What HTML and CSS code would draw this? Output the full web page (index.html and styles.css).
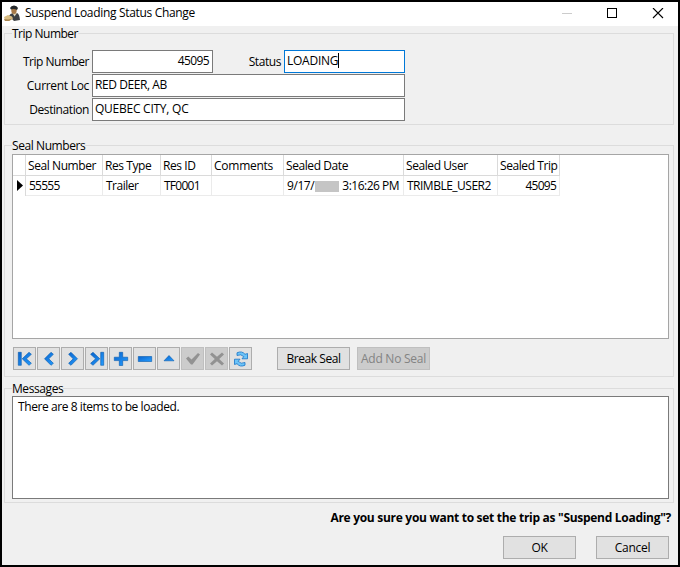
FILE: index.html
```html
<!DOCTYPE html>
<html lang="en">
<head>
<meta charset="utf-8">
<title>Suspend Loading Status Change</title>
<link rel="stylesheet" href="styles.css">
</head>
<body>
<div class="window">
  <header class="titlebar">
    <svg class="app-icon" width="17" height="17" viewBox="0 0 17 17">
      <path d="M5 11Q6 8.500 9 8h4Q15.500 9 16 15l-6 1z" fill="#3c4043"/>
      <path d="M8.500 8l2 3.500L13 8z" fill="#ddd4b8"/>
      <ellipse cx="10" cy="5.500" rx="2.700" ry="3.500" fill="#a77a48"/>
      <path d="M6 3Q7 .5 10 .5Q13 .5 14 3L13 5Q10 3.500 7 4.500z" fill="#25282b"/>
      <path d="M0 12l4-2 4 1.500 1 2-4 2.500H1z" fill="#d9bd82"/>
      <path d="M0 14l4 .5 5-1-4 2.500H1z" fill="#a98550"/>
    </svg>
    <span class="title">Suspend Loading Status Change</span>
    <svg class="controls" width="102" height="12" viewBox="0 0 102 12" fill="none">
      <path d="M0 5.500h10" stroke="#ccc"/>
      <rect x="45.500" y=".5" width="9" height="9" stroke="#000"/>
      <path d="M91 0l10 10M101 0L91 10" stroke="#000" stroke-width="1.100"/>
    </svg>
  </header>
  <main>
    <fieldset class="trip">
      <legend class="tight">Trip Number</legend>
      <div class="row">
        <label class="tight">Trip Number</label><div class="field short num">45095</div>
        <label class="status-label">Status</label><div class="field short focus"><span>LOADING</span><i class="caret"></i></div>
      </div>
      <div class="row"><label class="loc-label">Current Loc</label><div class="field long location">RED DEER, AB</div></div>
      <div class="row"><label>Destination</label><div class="field long">QUEBEC CITY, QC</div></div>
    </fieldset>

    <fieldset class="seals">
      <legend>Seal Numbers</legend>
      <div class="grid">
        <div class="cells head">
          <span></span><span>Seal Number</span><span>Res Type</span><span>Res ID</span><span class="comments">Comments</span><span>Sealed Date</span><span>Sealed User</span><span>Sealed Trip</span>
        </div>
        <div class="cells data">
          <span class="marker"><svg width="6" height="11" viewBox="0 0 6 11"><path d="M0 0l6 5.500L0 11z"/></svg></span><span class="digits">55555</span><span class="tight">Trailer</span><span class="digits">TF0001</span><span></span><span class="date">9/17/<i class="redacted"></i><span class="tight">3:16:26 PM</span></span><span class="tight">TRIMBLE_USER2</span><span class="right digits">45095</span>
        </div>
      </div>
      <div class="toolbar">
        <svg width="0" height="0" class="defs"><defs><linearGradient id="b" x1="0" y1="0" x2="1" y2="1"><stop offset="0" stop-color="#0b64cc"/><stop offset="1" stop-color="#249cff"/></linearGradient></defs></svg>
        <button><svg viewBox="0 0 21 21" class="blue"><path d="M4.300 4.300h3v13h-3zM15 4.300l2.400 2-5 4.500 5 4.500-2.400 2-6.800-6.500z"/></svg></button>
        <button><svg viewBox="0 0 21 21" class="blue"><path d="M13 4.300l2.400 2-4.600 4.500 4.600 4.500-2.400 2-6.500-6.500z"/></svg></button>
        <button><svg viewBox="0 0 21 21" class="blue"><path d="M9 4.300l-2.400 2 4.600 4.500-4.600 4.500 2.400 2 6.500-6.500z"/></svg></button>
        <button><svg viewBox="0 0 21 21" class="blue"><path d="M14.700 4.300h3v13h-3zM7 4.300l-2.400 2 5 4.500-5 4.500 2.400 2 6.800-6.500z"/></svg></button>
        <button><svg viewBox="0 0 21 21" class="blue"><path d="M9.300 4.300h3.400v4.900h5v3.400h-5v4.900H9.300v-4.900h-5V9.200h5z"/></svg></button>
        <button><svg viewBox="0 0 21 21" class="blue"><path d="M4.300 8.500h13.400v5H4.300z"/></svg></button>
        <button><svg viewBox="0 0 21 21" class="blue"><path d="M6 12.800l5-5.300 5 5.300z"/></svg></button>
        <button disabled><svg viewBox="0 0 21 21"><path d="M4 10.500l2.300-2 3.200 3 6.500-6.500L18 6.500l-7.500 10H9z"/></svg></button>
        <button disabled><svg viewBox="0 0 21 21"><path d="M4 6.500l2-2 5 4.300 5-4.300 2 2-4.800 4.500 4.800 4.500-2 2-5-4.300-5 4.300-2-2L8.800 11z"/></svg></button>
        <button><svg viewBox="0 0 21 21"><g fill="#6cc4f8" stroke="#1673c8" stroke-width=".8"><path d="M7 7.500V4.800Q12 2.500 15 6.300L17.500 5.500v5.300h-5.500l1.800-2.200Q11 5.600 7 7.500z"/><path d="M15 14.500v2.700Q10 19.500 7 15.700L4.500 16.500v-5.300H10l-1.800 2.200Q11 16.400 15 14.500z"/></g></svg></button>
        <button class="wide break">Break Seal</button>
        <button class="wide add" disabled>Add No Seal</button>
      </div>
    </fieldset>

    <fieldset class="messages">
      <legend>Messages</legend>
      <div class="memo">There are 8 items to be loaded.</div>
    </fieldset>
  </main>
  <p class="question">Are you sure you want to set the trip as "Suspend Loading"?</p>
  <footer><button class="wide">OK</button><button class="wide">Cancel</button></footer>
</div>
</body>
</html>
```
FILE: styles.css
```css
* { box-sizing: border-box; }
body {
  margin: 0;
  font: 12px/16px "Open Sans", "Noto Sans", sans-serif;
  letter-spacing: -0.42px;
  color: #000;
  white-space: nowrap;
}
.window {
  width: 680px;
  height: 567px;
  border: 2px solid #000;
  background: #f0f0f0;
  overflow: hidden;
}
.titlebar {
  display: flex;
  height: 24px;
  padding-left: 2px;
  background: #fff;
}
.app-icon { margin-top: 3px; }
.title { margin: 3px 0 0 4px; letter-spacing: -0.32px; }
.controls { margin: 6px 14px 0 auto; }
main { display: block; padding: 0 4px 0 2px; }
fieldset {
  display: block;
  min-width: 0;
  margin: 0;
  padding: 0 0 0 7px;
  border: 1px solid #dcdcdc;
}
legend {
  height: 15px;
  padding: 0;
  margin-bottom: 0;
}
.tight { letter-spacing: -0.5px; }
.trip { height: 99px; }
.row { display: flex; height: 24px; }
.trip legend { margin-bottom: 9px; }
.row label { width: 77px; margin-right: 3px; padding-top: 4px; text-align: right; }
.row .status-label { width: 68px; }
.row .loc-label { letter-spacing: -0.3px; }
.field {
  height: 23px;
  padding: 2px 2px;
  border: 1px solid #7a7a7a;
  background: #fff;
  letter-spacing: -0.25px;
}
.short { width: 121px; }
.long { width: 313px; }
.location { letter-spacing: -0.42px; }
.num { padding-right: 3px; text-align: right; letter-spacing: -0.6px; }
.focus { display: flex; border-color: #0078d7; }
.caret { width: 1px; height: 15px; background: #000; }
.seals { height: 239px; margin-top: 13px; }
.seals legend { margin-bottom: 1px; }
.grid {
  width: 657px;
  height: 185px;
  border: 1px solid #a5a5a5;
  background: #fff;
}
.cells {
  display: grid;
  grid-template-columns: 13px 77px 58px 51px 72px 120px 94px 62px;
  width: 547px;
}
.cells > span {
  height: 20px;
  padding: 2px 0 0 3px;
  border-right: 1px solid #ebebeb;
  border-bottom: 1px solid #ebebeb;
}
.head > span {
  height: 21px;
  padding: 3px 0 0 2px;
  border-color: #dadada;
}
.comments { letter-spacing: -0.25px; }
.digits { letter-spacing: -0.75px; }
.cells > .marker { padding: 4px 0 0 4px; border-bottom: 0; border-color: #dadada; }
.marker svg { display: block; }
.cells .date { display: flex; }
.redacted { width: 24px; height: 11px; margin: 3px 3px 0 1px; background: #c5c5c5; }
.cells .right { padding-right: 3px; text-align: right; }
.toolbar { display: flex; gap: 1px; padding: 8px 0 0 1px; }
.defs { position: absolute; }
button {
  width: 23px;
  height: 23px;
  padding: 0;
  border: 1px solid #adadad;
  background: #e1e1e1;
  color: #000;
  font: inherit;
  letter-spacing: inherit;
}
button svg { display: block; width: 21px; height: 21px; }
button:disabled { background: #ccc; border-color: #bfbfbf; color: #838383; fill: #929292; }
.blue { fill: url(#b); stroke: #075bad; stroke-width: .6; }
.wide { width: 73px; letter-spacing: -0.3px; }
.break { margin-left: 24px; letter-spacing: -0.45px; }
.add { margin-left: 6px; letter-spacing: -0.25px; }
.messages { height: 122px; margin-top: 4px; }
.memo {
  width: 657px;
  height: 103px;
  padding: 2px 5px;
  border: 1px solid #7a7a7a;
  background: #fff;
}
.question { margin: 7px 7px 0 0; font-weight: bold; text-align: right; letter-spacing: -0.29px; }
footer { display: flex; justify-content: flex-end; gap: 20px; margin: 10px 9px 0 0; }
```
